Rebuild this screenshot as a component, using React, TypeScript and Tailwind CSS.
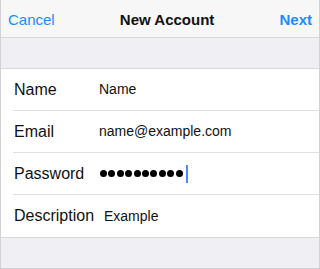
import React from "react";

const rows = [
  { label: "Name", value: "Name" },
  { label: "Email", value: "name@example.com" },
  { label: "Password", value: "" },
  { label: "Description", value: "Example" },
];

export default function App() {
  return (
    <div
      className="w-[320px] h-[269px] bg-[#efeff4] border-x border-b border-[#d2d2d6] flex flex-col overflow-hidden"
      style={{ fontFamily: '"Liberation Sans", Arial, sans-serif' }}
    >
      {/* Nav bar */}
      <div className="h-[38px] bg-[#f7f7f7] border-b border-[#d8d8dc] flex items-center justify-between px-[7px] pt-[4px] shrink-0">
        <span className="text-[15px] text-[#1a8cff]">Cancel</span>
        <span className="text-[15px] font-bold text-[#111]">New Account</span>
        <span className="text-[15px] font-bold text-[#1a8cff]">Next</span>
      </div>

      <div className="h-[30px] shrink-0" />

      {/* Form */}
      <div className="bg-white border-y border-[#d8d8dc] pl-[12px] shrink-0">
        {rows.map((row, i) => (
          <div
            key={row.label}
            className={`h-[42px] flex items-center ${i < rows.length - 1 ? "border-b border-[#e0e0e4]" : ""}`}
          >
            <span className="text-[16px] text-[#111] w-[86px] shrink-0 pl-[1px]">{row.label}</span>
            {row.label === "Password" ? (
              <div className="flex items-center gap-[1.4px] pl-[1px]">
                {Array.from({ length: 10 }).map((_, j) => (
                  <div key={j} className="w-[7px] h-[7px] rounded-full bg-black" />
                ))}
                <div className="w-[2px] h-[18px] bg-[#4d8cf5] ml-[2px]" />
              </div>
            ) : (
              <span className={`text-[14px] text-[#111] ${row.label === "Description" ? "pl-[5px]" : ""}`}>
                {row.value}
              </span>
            )}
          </div>
        ))}
      </div>
    </div>
  );
}
